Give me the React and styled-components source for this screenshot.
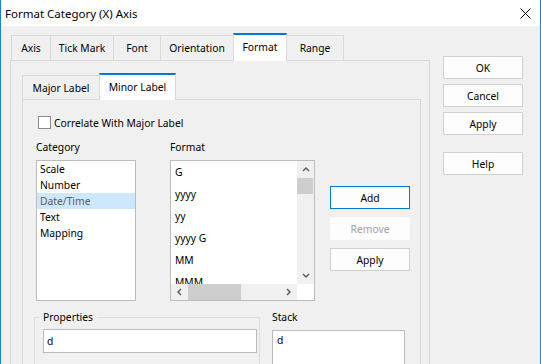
import React from 'react'
import styled, { createGlobalStyle } from 'styled-components'

const GlobalStyle = createGlobalStyle`
  html, body {
    margin: 0;
    padding: 0;
  }
  body {
    width: 541px;
    height: 364px;
    overflow: hidden;
    background: #f0f0f0;
    font-family: "Noto Sans", "Liberation Sans", sans-serif;
    font-size: 10.3px;
    color: #000;
  }
`

const Window = styled.div`
  width: 541px;
  height: 364px;
  box-sizing: border-box;
  border-left: 1px solid #1883d7;
  border-right: 1px solid #1883d7;
  background: #f0f0f0;
  display: flex;
  flex-direction: column;
  overflow: hidden;
`

const TitleBar = styled.div`
  height: 26px;
  flex: none;
  background: #fff;
  display: flex;
  align-items: center;
  justify-content: space-between;
  padding: 0 9px 0 4px;
  font-size: 11.5px;
`

const Body = styled.div`
  flex: 1;
  min-height: 0;
  display: flex;
  gap: 13px;
  padding: 7px 0 0 9px;
`

const LeftCol = styled.div`
  width: 420px;
  display: flex;
  flex-direction: column;
`

const TabStrip = styled.div`
  display: flex;
  align-items: flex-end;
  flex: none;
  height: ${p => p.h}px;
  padding-left: ${p => p.indent || 0}px;
  position: relative;
  z-index: 1;
`

const Tab = styled.div`
  box-sizing: border-box;
  width: ${p => p.w}px;
  height: ${p => (p.active ? p.h + 1 : p.h - 2)}px;
  margin-left: -1px;
  margin-bottom: ${p => (p.active ? -1 : 0)}px;
  &:first-child { margin-left: 0; }
  display: flex;
  align-items: center;
  justify-content: center;
  border: 1px solid #d9d9d9;
  border-bottom: none;
  border-top: ${p => (p.active ? '2px solid #0078d7' : '1px solid #d9d9d9')};
  background: ${p => (p.active ? '#fff' : '#f0f0f0')};
  position: relative;
  z-index: ${p => (p.active ? 2 : 0)};
  padding-bottom: ${p => (p.active ? 2 : 0)}px;
`

const Panel = styled.div`
  flex: 1;
  box-sizing: border-box;
  border: 1px solid #d9d9d9;
  border-bottom: none;
  padding: 12px 8px 0 11px;
  display: flex;
  flex-direction: column;
`

const InnerPanel = styled.div`
  flex: 1;
  box-sizing: border-box;
  border: 1px solid #d9d9d9;
  border-bottom: none;
  padding: 16px 0 0 13px;
  display: flex;
  flex-direction: column;
`

const CheckRow = styled.label`
  display: flex;
  align-items: center;
  gap: 3px;
  margin-left: 2px;
  height: 13px;
`

const CheckBox = styled.span`
  width: 13px;
  height: 13px;
  box-sizing: border-box;
  border: 1px solid #8a8a8a;
  background: #fff;
`

const ListsRow = styled.div`
  display: flex;
  margin-top: 11px;
`

const Column = styled.div`
  width: ${p => p.w}px;
  margin-right: ${p => p.mr || 0}px;
  display: flex;
  flex-direction: column;
`

const FieldLabel = styled.div`
  height: 14px;
  line-height: 14px;
  margin-bottom: 6px;
`

const ListBox = styled.div`
  box-sizing: border-box;
  height: 141px;
  border: 1px solid #bcbcbc;
  background: #fff;
  overflow: hidden;
`

const ListItem = styled.div`
  height: ${p => p.h}px;
  line-height: ${p => p.h}px;
  padding-left: ${p => p.pl}px;
  white-space: nowrap;
  background: ${p => (p.selected ? '#cce8ff' : 'transparent')};
  color: ${p => (p.selected ? '#5c5c5c' : '#000')};
`

const ScrollGrid = styled.div`
  display: grid;
  grid-template-columns: 126px 17px;
  grid-template-rows: 123px 16px;
  height: 100%;
`

const ItemsArea = styled.div`
  overflow: hidden;
`

const VScroll = styled.div`
  background: #f0f0f0;
  display: flex;
  flex-direction: column;
`

const HScroll = styled.div`
  background: #f0f0f0;
  display: flex;
`

const ArrowBox = styled.div`
  width: ${p => p.w}px;
  height: ${p => p.h}px;
  flex: none;
  display: flex;
  align-items: center;
  justify-content: center;
`

const Thumb = styled.div`
  background: #cdcdcd;
  width: ${p => p.w}px;
  height: ${p => p.h}px;
  flex: none;
`

const Filler = styled.div`
  flex: 1;
`

const Corner = styled.div`
  background: #fff;
`

const ButtonCol = styled.div`
  display: flex;
  flex-direction: column;
  gap: ${p => p.gap}px;
  padding-top: ${p => p.top}px;
`

const Button = styled.div`
  box-sizing: border-box;
  width: 80px;
  height: 23px;
  display: flex;
  align-items: center;
  justify-content: center;
  background: #fdfdfd;
  border: 1px solid ${p => (p.focus ? '#0078d7' : p.disabled ? '#fbfbfb' : '#d0d0d0')};
  color: ${p => (p.disabled ? '#a0a0a0' : '#000')};
  margin-top: ${p => p.extra || 0}px;
`

const BottomRow = styled.div`
  display: flex;
  margin-top: 9px;
  flex: 1;
`

const Group = styled.fieldset`
  box-sizing: border-box;
  width: 226px;
  margin: 0 12px 0 -2px;
  padding: 5px 2px 0 8px;
  border: 1px solid #dcdcdc;
  border-bottom: none;
  min-width: 0;
`

const Legend = styled.legend`
  padding: 0 4px;
  margin-left: -4px;
  line-height: 14px;
`

const TextBox = styled.div`
  box-sizing: border-box;
  height: 24px;
  border: 1px solid #bcbcbc;
  background: #fff;
  padding-left: 3px;
  line-height: 22px;
`

const StackBox = styled.div`
  box-sizing: border-box;
  width: 133px;
  flex: 1;
  border: 1px solid #bcbcbc;
  border-bottom: none;
  background: #fff;
  padding: 2px 0 0 4px;
  line-height: 15px;
`

const StackCol = styled.div`
  display: flex;
  flex-direction: column;
`

const Chevron = ({ dir }) => {
  const pts = {
    up: '1,5 4,2 7,5',
    down: '1,2 4,5 7,2',
    left: '5,1 2,4 5,7',
    right: '2,1 5,4 2,7',
  }[dir]
  return (
    <svg width="8" height="8" viewBox="0 0 8 8">
      <polyline points={pts} fill="none" stroke="#606060" strokeWidth="1.5" />
    </svg>
  )
}

const outerTabs = [
  ['Axis', 40],
  ['Tick Mark', 64],
  ['Font', 48],
  ['Orientation', 74],
  ['Format', 54, true],
  ['Range', 58],
]

const categories = ['Scale', 'Number', 'Date/Time', 'Text', 'Mapping']
const formats = ['G', 'yyyy', 'yy', 'yyyy G', 'MM', 'MMM']

export default function App() {
  return (
    <>
      <GlobalStyle />
      <Window>
        <TitleBar>
          <span>Format Category (X) Axis</span>
          <svg width="11" height="11" viewBox="0 0 11 11">
            <path d="M0.5 0.5 L10.5 10.5 M10.5 0.5 L0.5 10.5" stroke="#000" strokeWidth="1" />
          </svg>
        </TitleBar>
        <Body>
          <LeftCol>
            <TabStrip h={27} indent={1}>
              {outerTabs.map(([label, w, active]) => (
                <Tab key={label} w={w} h={27} active={active}>{label}</Tab>
              ))}
            </TabStrip>
            <Panel>
              <TabStrip h={26}>
                <Tab w={78} h={26}>Major Label</Tab>
                <Tab w={77} h={26} active>Minor Label</Tab>
              </TabStrip>
              <InnerPanel>
                <CheckRow>
                  <CheckBox />
                  <span>Correlate With Major Label</span>
                </CheckRow>
                <ListsRow>
                  <Column w={100} mr={34}>
                    <FieldLabel>Category</FieldLabel>
                    <ListBox>
                      {categories.map(c => (
                        <ListItem key={c} h={16} pl={3} selected={c === 'Date/Time'}>{c}</ListItem>
                      ))}
                    </ListBox>
                  </Column>
                  <Column w={145} mr={15}>
                    <FieldLabel>Format</FieldLabel>
                    <ListBox>
                      <ScrollGrid>
                        <ItemsArea>
                          {formats.map(f => (
                            <ListItem key={f} h={22} pl={4}>{f}</ListItem>
                          ))}
                        </ItemsArea>
                        <VScroll>
                          <ArrowBox w={17} h={17}><Chevron dir="up" /></ArrowBox>
                          <Thumb w={16} h={16} />
                          <Filler />
                          <ArrowBox w={17} h={17}><Chevron dir="down" /></ArrowBox>
                        </VScroll>
                        <HScroll>
                          <ArrowBox w={17} h={16}><Chevron dir="left" /></ArrowBox>
                          <Thumb w={53} h={16} />
                          <Filler />
                          <ArrowBox w={17} h={16}><Chevron dir="right" /></ArrowBox>
                        </HScroll>
                        <Corner />
                      </ScrollGrid>
                    </ListBox>
                  </Column>
                  <ButtonCol top={46} gap={8}>
                    <Button focus>Add</Button>
                    <Button disabled>Remove</Button>
                    <Button>Apply</Button>
                  </ButtonCol>
                </ListsRow>
                <BottomRow>
                  <Group>
                    <Legend>Properties</Legend>
                    <TextBox>d</TextBox>
                  </Group>
                  <StackCol>
                    <FieldLabel>Stack</FieldLabel>
                    <StackBox>d</StackBox>
                  </StackCol>
                </BottomRow>
              </InnerPanel>
            </Panel>
          </LeftCol>
          <ButtonCol top={23} gap={5}>
            <Button>OK</Button>
            <Button>Cancel</Button>
            <Button>Apply</Button>
            <Button extra={12}>Help</Button>
          </ButtonCol>
        </Body>
      </Window>
    </>
  )
}
